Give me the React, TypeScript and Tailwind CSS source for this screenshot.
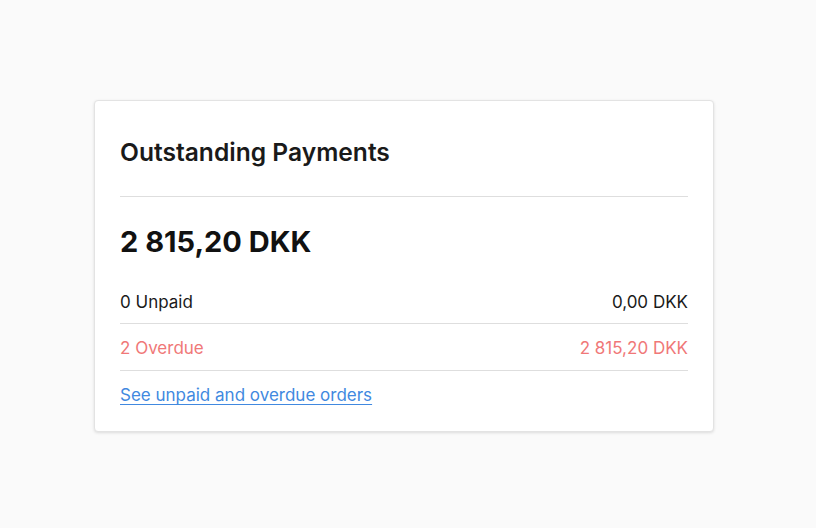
export default function App() {
  return (
    <div className="min-h-[528px] w-full bg-[#fafafa] pt-[100px] flex justify-center" style={{ fontFamily: "Inter, 'Noto Sans', sans-serif" }}>
      <div className="w-[620px] h-[332px] bg-white border border-[#e3e3e3] rounded-[4px] shadow-[0_1px_3px_rgba(0,0,0,0.12)] px-[25px] pt-[34px] ml-[-8px]">
        <h2 className="text-[24.6px] leading-[34px] font-semibold text-[#1a1a1a]">Outstanding Payments</h2>
        <div className="mt-[27px] border-t border-[#dedede]" />
        <div className="mt-[27px] text-[29px] leading-[36px] font-bold text-[#111]">2 815,20 DKK</div>
        <div className="mt-[30px] flex justify-between text-[17px] leading-[24px] text-[#1a1a1a] pb-[9px] border-b border-[#dedede]">
          <span>0 Unpaid</span>
          <span>0,00 DKK</span>
        </div>
        <div className="pt-[12px] flex justify-between text-[17px] leading-[24px] text-[#f07878] pb-[10px] border-b border-[#dedede]">
          <span>2 Overdue</span>
          <span>2 815,20 DKK</span>
        </div>
        <div className="pt-[12px] text-[17px] leading-[24px]">
          <a href="#" className="text-[#4189e0] underline underline-offset-[3px]">See unpaid and overdue orders</a>
        </div>
      </div>
    </div>
  );
}
